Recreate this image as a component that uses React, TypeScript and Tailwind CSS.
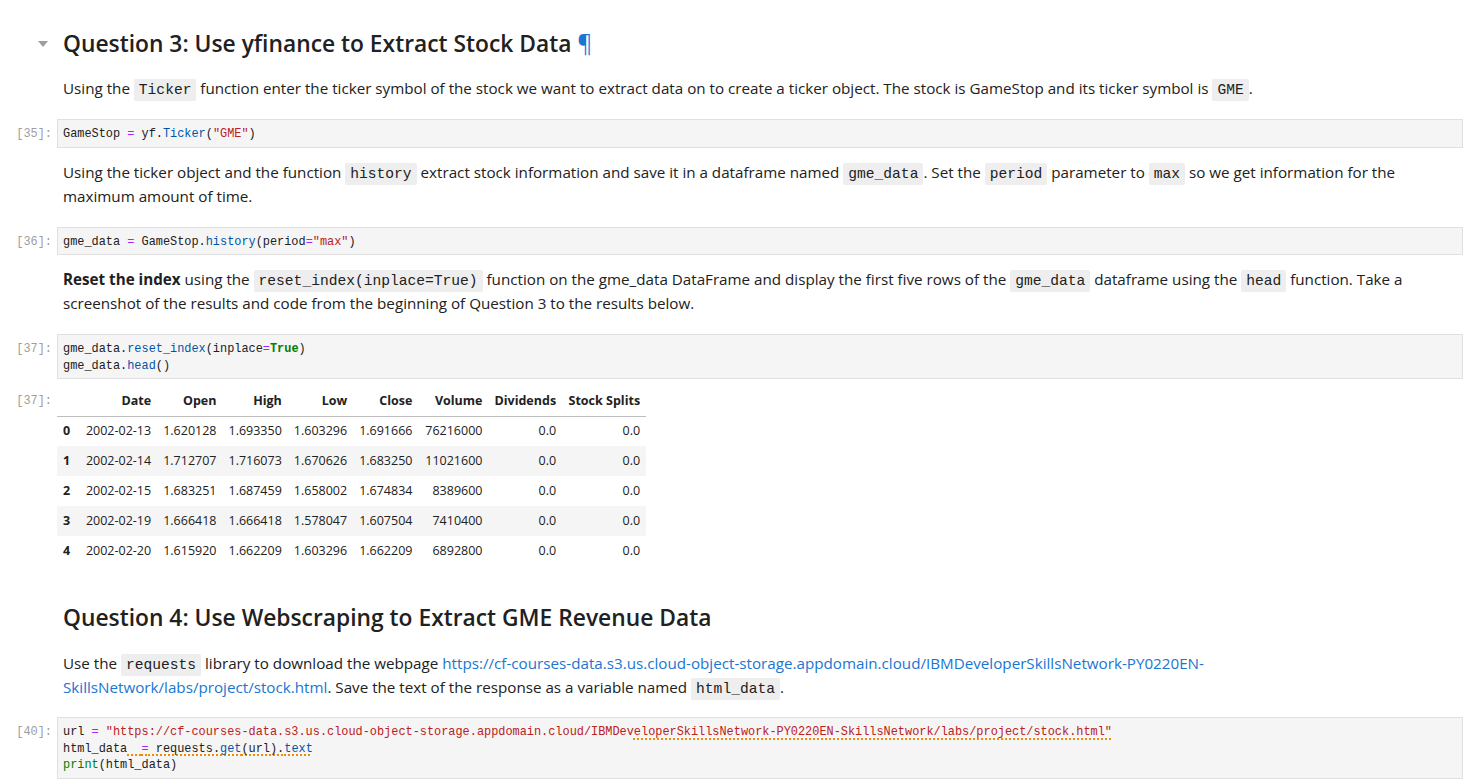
import React from "react";

function Code({ children }: { children: React.ReactNode }) {
  return (
    <code className="rounded-[2px] bg-[#eeeeee] px-[5px] py-[3px] font-['Liberation_Mono',monospace] text-[14.6px] leading-none text-[#212121]">
      {children}
    </code>
  );
}

function Prompt({ n }: { n: string }) {
  return (
    <div className="w-[52px] shrink-0 pt-[7px] text-right font-['Liberation_Mono',monospace] text-[11.9px] leading-[16.5px] text-[#9e9e9e]">
      [{n}]:
    </div>
  );
}

function CodeCell({ n, children }: { n: string; children: React.ReactNode }) {
  return (
    <div className="flex items-start pr-[8px]">
      <Prompt n={n} />
      <div className="ml-[5px] flex-1 whitespace-pre border border-[#e0e0e0] bg-[#f5f5f5] px-[5px] pt-[6px] pb-[4px] font-['Liberation_Mono',monospace] text-[11.9px] leading-[16.5px] text-[#212121]">
        {children}
      </div>
    </div>
  );
}

function Md({ children, className = "" }: { children: React.ReactNode; className?: string }) {
  return <div className={"pl-[63px] pr-[30px] text-[15.2px] leading-[24px] text-[#212121] " + className}>{children}</div>;
}

const Op = ({ c }: { c: string }) => <span className="text-[#aa22ff]">{c}</span>;
const Pr = ({ c }: { c: string }) => <span className="text-[#0055aa]">{c}</span>;
const Str = ({ c }: { c: string }) => <span className="text-[#ba2121]">{c}</span>;

const rows = [
  ["0", "2002-02-13", "1.620128", "1.693350", "1.603296", "1.691666", "76216000", "0.0", "0.0"],
  ["1", "2002-02-14", "1.712707", "1.716073", "1.670626", "1.683250", "11021600", "0.0", "0.0"],
  ["2", "2002-02-15", "1.683251", "1.687459", "1.658002", "1.674834", "8389600", "0.0", "0.0"],
  ["3", "2002-02-19", "1.666418", "1.666418", "1.578047", "1.607504", "7410400", "0.0", "0.0"],
  ["4", "2002-02-20", "1.615920", "1.662209", "1.603296", "1.662209", "6892800", "0.0", "0.0"],
];
const heads = ["", "Date", "Open", "High", "Low", "Close", "Volume", "Dividends", "Stock Splits"];
const widths = [19, 81, 65, 65, 65, 64, 70, 73, 84];

export default function App() {
  return (
    <div className="min-h-screen bg-white pt-[28px] font-['Open_Sans','Noto_Sans',sans-serif] text-[#212121]">
      {/* question 3 */}
      <div className="flex items-center">
        <div className="flex w-[57px] shrink-0 justify-end pr-[9px]">
          <svg width="10" height="6" viewBox="0 0 10 6">
            <polygon points="0,0 10,0 5,6" fill="#9e9e9e" />
          </svg>
        </div>
        <h2 className="pl-[6px] text-[22.8px] font-semibold leading-[32px]">
          Question 3: Use yfinance to Extract Stock Data <span className="font-normal text-[#1976d2]">¶</span>
        </h2>
      </div>

      <Md className="mt-[16px]">
        Using the <Code>Ticker</Code> function enter the ticker symbol of the stock we want to extract data on to create a
        ticker object. The stock is GameStop and its ticker symbol is <Code>GME</Code>.
      </Md>

      <div className="mt-[19px]">
        <CodeCell n="35">
          GameStop <Op c="=" /> yf.<Pr c="Ticker" />(<Str c={'"GME"'} />)
        </CodeCell>
      </div>

      <Md className="mt-[12px]">
        Using the ticker object and the function <Code>history</Code> extract stock information and save it in a dataframe
        named <Code>gme_data</Code>. Set the <Code>period</Code> parameter to <Code>max</Code> so we get information for the
        maximum amount of time.
      </Md>

      <div className="mt-[19px]">
        <CodeCell n="36">
          gme_data <Op c="=" /> GameStop.<Pr c="history" />(period<Op c="=" />
          <Str c={'"max"'} />)
        </CodeCell>
      </div>

      <Md className="mt-[12px]">
        <b className="font-bold">Reset the index</b> using the <Code>reset_index(inplace=True)</Code> function on the gme_data
        DataFrame and display the first five rows of the <Code>gme_data</Code> dataframe using the <Code>head</Code> function.
        Take a screenshot of the results and code from the beginning of Question 3 to the results below.
      </Md>

      <div className="mt-[19px]">
        <CodeCell n="37">
          gme_data.<Pr c="reset_index" />(inplace<Op c="=" />
          <span className="font-bold text-[#008000]">True</span>)
          {"\n"}gme_data.<Pr c="head" />()
        </CodeCell>
      </div>

      {/* output table */}
      <div className="mt-[8px] flex items-start">
        <div className="w-[52px] shrink-0 pt-[6px] text-right font-['Liberation_Mono',monospace] text-[11.9px] leading-[16.5px] text-[#9e9e9e]">
          [37]:
        </div>
        <table className="ml-[5px] table-fixed border-collapse text-[12.5px] text-[#212121]">
          <colgroup>
            {widths.map((w, i) => (
              <col key={i} style={{ width: w }} />
            ))}
          </colgroup>
          <thead>
            <tr className="h-[29px] border-b border-[#bdbdbd]">
              {heads.map((h, i) => (
                <th key={i} className="whitespace-nowrap px-[6px] text-right font-bold">
                  {h}
                </th>
              ))}
            </tr>
          </thead>
          <tbody>
            {rows.map((r, ri) => (
              <tr key={ri} className={"h-[30px] " + (ri % 2 === 1 ? "bg-[#f5f5f5]" : "")}>
                {r.map((c, ci) => (
                  <td key={ci} className={"whitespace-nowrap px-[6px] text-right " + (ci === 0 ? "font-bold" : "")}>
                    {c}
                  </td>
                ))}
              </tr>
            ))}
          </tbody>
        </table>
      </div>

      {/* question 4 */}
      <h2 className="mt-[36px] pl-[63px] text-[22.8px] font-semibold leading-[32px]">
        Question 4: Use Webscraping to Extract GME Revenue Data
      </h2>

      <Md className="mt-[17px]">
        Use the <Code>requests</Code> library to download the webpage{" "}
        <a className="text-[#1976d2]">
          https://cf-courses-data.s3.us.cloud-object-storage.appdomain.cloud/IBMDeveloperSkillsNetwork-PY0220EN-SkillsNetwork/labs/project/stock.html
        </a>
        . Save the text of the response as a variable named <Code>html_data</Code>.
      </Md>

      <div className="mt-[18px]">
        <CodeCell n="40">
          url <Op c="=" /> <Str c={'"https://cf-courses-data.s3.us.cloud-object-storage.appdomain.cloud/IBMDev'} />
          <span className="text-[#ba2121] underline decoration-[#f08c00] decoration-dotted decoration-2 underline-offset-[3px]">
            {'eloperSkillsNetwork-PY0220EN-SkillsNetwork/labs/project/stock.html"'}
          </span>
          {"\n"}html_data
          <span className="underline decoration-[#f08c00] decoration-dotted decoration-2 underline-offset-[3px]">
            {"  "}
            <Op c="=" /> requests.<Pr c="get" />(url).<Pr c="text" />
          </span>
          {"\n"}
          <span className="text-[#008000]">print</span>(html_data)
        </CodeCell>
      </div>
    </div>
  );
}
